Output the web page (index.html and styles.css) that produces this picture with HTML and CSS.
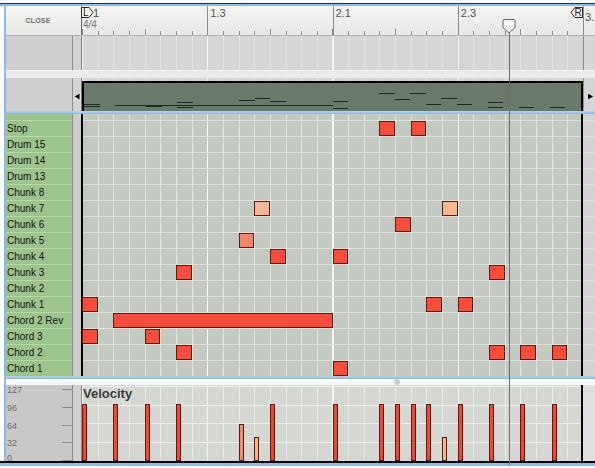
FILE: index.html
```html
<!DOCTYPE html>
<html>
<head>
<meta charset="utf-8">
<link rel="stylesheet" href="styles.css">
</head>
<body>
<div class="app">
  <div class="topbar"></div>
  <div class="body">
    <!-- ruler -->
    <div class="sec ruler">
      <div class="side rside"><span class="close">CLOSE</span></div>
      <div class="gutter rgutter"></div>
      <div class="lane">
        <div class="loop rloop">
          <div class="rcell first">
            <div class="lrow">
              <svg class="lmark" width="13" height="11" viewBox="0 0 13 11"><path d="M0.5 0.5 H8 L12 5.5 L8 10.5 H0.5 Z" fill="#f6f6f6" stroke="#2a2a2a"/><text x="2" y="9.3" font-size="10" font-family="Liberation Sans, sans-serif" fill="#222">L</text></svg>
              <span class="num one">1</span>
            </div>
            <div class="sig">4/4</div>
          </div>
          <div class="rcell"><span class="num">1.3</span></div>
          <div class="rcell"><span class="num">2.1</span></div>
          <div class="rcell last"><span class="num">2.3</span>
            <svg class="rmark" width="13" height="11" viewBox="0 0 13 11"><path d="M12.5 0.5 H5 L1 5.5 L5 10.5 H12.5 Z" fill="#f6f6f6" stroke="#2a2a2a"/><text x="4.6" y="9.3" font-size="10" font-family="Liberation Sans, sans-serif" fill="#222">R</text></svg>
          </div>
        </div>
        <div class="after rafter"><span class="num">3.1</span></div>
      </div>
    </div>

    <!-- lane strip -->
    <div class="sec lanes">
      <div class="side gside"></div>
      <div class="gutter ggutter"></div>
      <div class="lane">
        <div class="loop gridv lanebg"></div>
        <div class="after lafter"></div>
      </div>
    </div>

    <div class="gap"></div>

    <!-- overview -->
    <div class="sec ov">
      <div class="side gside"></div>
      <div class="gutter ggutter ovgutter">
        <svg width="8" height="9" viewBox="0 0 8 9"><path d="M0.8 4.5 L7 0.8 V8.2 Z" fill="#000" stroke="#fff" stroke-width="0.8"/></svg>
      </div>
      <div class="lane">
        <div class="loop gridv lanebg ovloop">
          <div class="clip">
            <i style="grid-row:12;grid-column:1 / span 1"></i>
            <i style="grid-row:14;grid-column:1 / span 1"></i>
            <i style="grid-row:13;grid-column:3 / span 14"></i>
            <i style="grid-row:14;grid-column:5 / span 1"></i>
            <i style="grid-row:10;grid-column:7 / span 1"></i>
            <i style="grid-row:15;grid-column:7 / span 1"></i>
            <i style="grid-row:8;grid-column:11 / span 1"></i>
            <i style="grid-row:6;grid-column:12 / span 1"></i>
            <i style="grid-row:9;grid-column:13 / span 1"></i>
            <i style="grid-row:9;grid-column:17 / span 1"></i>
            <i style="grid-row:16;grid-column:17 / span 1"></i>
            <i style="grid-row:1;grid-column:20 / span 1"></i>
            <i style="grid-row:7;grid-column:21 / span 1"></i>
            <i style="grid-row:1;grid-column:22 / span 1"></i>
            <i style="grid-row:12;grid-column:23 / span 1"></i>
            <i style="grid-row:6;grid-column:24 / span 1"></i>
            <i style="grid-row:12;grid-column:25 / span 1"></i>
            <i style="grid-row:10;grid-column:27 / span 1"></i>
            <i style="grid-row:15;grid-column:27 / span 1"></i>
            <i style="grid-row:15;grid-column:29 / span 1"></i>
            <i style="grid-row:15;grid-column:31 / span 1"></i>
          </div>
        </div>
        <div class="after ovafter">
          <svg width="9" height="9" viewBox="0 0 9 9"><path d="M8 4.5 L1.5 0.8 V8.2 Z" fill="#000" stroke="#fff" stroke-width="0.8"/></svg>
        </div>
      </div>
    </div>

    <div class="hsep"></div>

    <!-- piano roll -->
    <div class="sec roll">
      <div class="side labels">
        <div class="lbl top"></div>
        <div class="lbl">Stop</div>
        <div class="lbl">Drum 15</div>
        <div class="lbl">Drum 14</div>
        <div class="lbl">Drum 13</div>
        <div class="lbl">Chunk 8</div>
        <div class="lbl">Chunk 7</div>
        <div class="lbl">Chunk 6</div>
        <div class="lbl">Chunk 5</div>
        <div class="lbl">Chunk 4</div>
        <div class="lbl">Chunk 3</div>
        <div class="lbl">Chunk 2</div>
        <div class="lbl">Chunk 1</div>
        <div class="lbl">Chord 2 Rev</div>
        <div class="lbl">Chord 3</div>
        <div class="lbl">Chord 2</div>
        <div class="lbl">Chord 1</div>
      </div>
      <div class="gutter rollgutter"></div>
      <div class="lane">
        <div class="loop gridv rollgrid">
          <div class="note red" style="grid-row:2;grid-column:20 / span 1"></div>
          <div class="note red" style="grid-row:2;grid-column:22 / span 1"></div>
          <div class="note peach" style="grid-row:7;grid-column:12 / span 1"></div>
          <div class="note peach" style="grid-row:7;grid-column:24 / span 1"></div>
          <div class="note red" style="grid-row:8;grid-column:21 / span 1"></div>
          <div class="note salmon" style="grid-row:9;grid-column:11 / span 1"></div>
          <div class="note red" style="grid-row:10;grid-column:13 / span 1"></div>
          <div class="note red" style="grid-row:10;grid-column:17 / span 1"></div>
          <div class="note red" style="grid-row:11;grid-column:7 / span 1"></div>
          <div class="note red" style="grid-row:11;grid-column:27 / span 1"></div>
          <div class="note red" style="grid-row:13;grid-column:1 / span 1"></div>
          <div class="note red" style="grid-row:13;grid-column:23 / span 1"></div>
          <div class="note red" style="grid-row:13;grid-column:25 / span 1"></div>
          <div class="note red" style="grid-row:14;grid-column:3 / span 14"></div>
          <div class="note red" style="grid-row:15;grid-column:1 / span 1"></div>
          <div class="note red" style="grid-row:15;grid-column:5 / span 1"></div>
          <div class="note red" style="grid-row:16;grid-column:7 / span 1"></div>
          <div class="note red" style="grid-row:16;grid-column:27 / span 1"></div>
          <div class="note red" style="grid-row:16;grid-column:29 / span 1"></div>
          <div class="note red" style="grid-row:16;grid-column:31 / span 1"></div>
          <div class="note red" style="grid-row:17;grid-column:17 / span 1"></div>
        </div>
        <div class="after rollafter"></div>
      </div>
    </div>

    <div class="hsep low"></div>
    <div class="wstrip"><span class="dot"></span></div>

    <!-- velocity -->
    <div class="sec vel">
      <div class="side vside">
        <div class="vl"><span>127</span><b></b></div>
        <div class="vl"><span>96</span><b></b></div>
        <div class="vl"><span>64</span><b></b></div>
        <div class="vl"><span>32</span><b></b></div>
        <div class="vl"><span>0</span><b></b></div>
      </div>
      <div class="gutter vgutter"></div>
      <div class="lane">
        <div class="loop gridv velgrid">
          <div class="vlabel">Velocity</div>
          <div class="vbars">
            <div class="vb red" style="grid-column:1;height:57px"></div>
            <div class="vb red" style="grid-column:3;height:57px"></div>
            <div class="vb red" style="grid-column:5;height:57px"></div>
            <div class="vb red" style="grid-column:7;height:57px"></div>
            <div class="vb salmon" style="grid-column:11;height:37px"></div>
            <div class="vb peach" style="grid-column:12;height:24px"></div>
            <div class="vb red" style="grid-column:13;height:57px"></div>
            <div class="vb red" style="grid-column:17;height:57px"></div>
            <div class="vb red" style="grid-column:20;height:57px"></div>
            <div class="vb red" style="grid-column:21;height:57px"></div>
            <div class="vb red" style="grid-column:22;height:57px"></div>
            <div class="vb red" style="grid-column:23;height:57px"></div>
            <div class="vb peach" style="grid-column:24;height:24px"></div>
            <div class="vb red" style="grid-column:25;height:57px"></div>
            <div class="vb red" style="grid-column:27;height:57px"></div>
            <div class="vb red" style="grid-column:29;height:57px"></div>
            <div class="vb red" style="grid-column:31;height:57px"></div>
          </div>
        </div>
        <div class="after velafter"></div>
      </div>
    </div>
  </div>
  <div class="bottom"></div>

  <div class="playhead"></div>
  <svg class="phmark" width="14" height="15" viewBox="0 0 14 15"><path d="M1 1.5 Q1 0.5 2 0.5 H12 Q13 0.5 13 1.5 V8.5 L7 14 L1 8.5 Z" fill="#f3f3f3" stroke="#6a6a6a"/></svg>
</div>
</body>
</html>
```

FILE: styles.css
```css
* { box-sizing: border-box; }
html, body { margin: 0; padding: 0; }
body { background: #fff; font-family: "Liberation Sans", Arial, sans-serif; }

.app { position: relative; width: 595px; height: 468px; overflow: hidden; background: #fff; }

.topbar { margin-top: 3px; height: 3px; border-top: 1px solid #2c2c2c; background: #8fbbe0; }
.body { margin-left: 4px; border-left: 2px solid #8fbbe0; }

.sec { display: flex; }
.side { width: 67px; flex: none; border-right: 1px solid #8c8c8c; }
.gutter { width: 9px; flex: none; border-right: 1px solid #7c7c7c; }
.lane { flex: 1; display: flex; min-width: 0; }
.loop { width: 501px; flex: none; }
.after { flex: 1; }

/* shared vertical grid lines (16th steps, brighter every half bar) */
.gridv {
  background-image:
    repeating-linear-gradient(to right, #f6f7f5 0 1px, transparent 1px 125.25px),
    repeating-linear-gradient(to right, #e2e5df 0 1px, transparent 1px 15.65625px);
}

/* ruler */
.ruler { height: 30px; border-bottom: 1px solid #b2b2b2; background: linear-gradient(#f4f4f2, #e7e7e5); }
.rside { border-right-color: transparent; display: flex; align-items: center; justify-content: center; padding-right: 2px; padding-bottom: 0; }
.close { font-size: 7px; font-weight: bold; color: #707070; letter-spacing: 0.2px; }
.rgutter { border-right-color: #6e6e6e; }
.rloop {
  display: grid;
  grid-template-columns: repeat(4, 1fr);
  background:
    repeating-linear-gradient(to right, #8a8a8a 0 1px, transparent 1px 62.625px) left bottom / 100% 6px no-repeat,
    repeating-linear-gradient(to right, #8a8a8a 0 1px, transparent 1px 15.65625px) left bottom / 100% 4px no-repeat;
}
.rcell { border-left: 1px solid #8a8a8a; padding: 1px 0 0 2px; display: flex; align-items: flex-start; }
.rcell.first { border-left: none; padding-left: 0; flex-direction: column; }
.num { font-size: 11px; color: #505050; line-height: 13px; }
.lrow { display: flex; align-items: flex-start; margin-left: -1px; }
.lmark { display: block; }
.num.one { margin-left: -1px; line-height: 12px; }
.sig { font-size: 10px; color: #7a7a7a; line-height: 10px; margin-top: 1px; padding-left: 1px; }
.rcell.last .rmark { margin-left: auto; margin-right: 0; display: block; }
.rafter { border-left: 1px solid #8a8a8a; padding: 1px 0 0 1px; }

/* lanes strip */
.lanes { height: 34px; }
.gside { background: #cfcfcf; }
.ggutter { background: #d3d3d3; }
.lanebg { background-color: #d5d5d5; }
.lafter { background: #d6d6d6; border-left: 1px solid #8a8a8a; }

.gap { height: 8px; background: #ececec; border-top: 1px solid #f4f4f4; }

/* overview */
.ov { height: 33px; }
.ovgutter { display: flex; align-items: center; justify-content: flex-end; padding-top: 3px; }
.ovgutter svg { display: block; margin-right: 0; }
.ovloop { padding-top: 3px; }
.clip {
  height: 30px;
  border: 2px solid #000;
  border-bottom: none;
  background: #6b796a;
  padding-top: 10px;
  margin-left: 0;
  display: grid;
  grid-template-columns: repeat(32, 1fr);
  grid-template-rows: repeat(16, 1px);
}
.clip i { display: block; background: #1f2a1f; height: 1px; }
.ovafter { background: #d6d6d6; border-left: 1px solid #8a8a8a; display: flex; align-items: center; padding-left: 2px; padding-top: 4px; }
.ovafter svg { display: block; }

.hsep { height: 3px; background: linear-gradient(#b4d3ec, #8dbadf); }

/* piano roll */
.roll { height: 262px; }
.labels { display: grid; grid-template-rows: 6px repeat(16, 16px); background: #9ec48e; }
.lbl { border-top: 1px solid #b9d6ac; font-size: 10px; line-height: 15px; color: #121212; padding-left: 1px; white-space: nowrap; }
.lbl.top { border-top: none; }
.rollgutter { background: #cbcbcb; border-right-color: #000; }
.rollgrid {
  display: grid;
  grid-template-columns: repeat(32, 1fr);
  grid-template-rows: 6px repeat(16, 16px);
  background-color: #c3c8c1;
  background-image:
    linear-gradient(to right, #000 0 1px, transparent 1px),
    linear-gradient(to left, #000 0 2px, transparent 2px),
    repeating-linear-gradient(to bottom, #dfe2dc 0 1px, transparent 1px 16px),
    repeating-linear-gradient(to right, #f6f7f5 0 1px, transparent 1px 125.25px),
    repeating-linear-gradient(to right, #e2e5df 0 1px, transparent 1px 15.65625px);
  background-size: 100% 100%, 100% 100%, 100% 256px, 100% 100%, 100% 100%;
  background-position: 0 0, 0 0, 0 6px, 0 0, 0 0;
  background-repeat: no-repeat;
}
.note { margin-top: 1px; height: 15px; border: 1px solid #5e1a10; }
.note.red { background: #f64c3b; }
.note.salmon { background: #f4866b; }
.note.peach { background: #f8b793; }
.rollafter {
  background-color: #d3d3d3;
  background-image: repeating-linear-gradient(to bottom, #e2e2e2 0 1px, transparent 1px 16px);
  background-position: 0 6px;
  background-size: 100% 256px;
  background-repeat: no-repeat;
}

.hsep.low { height: 3px; }
.wstrip { height: 6px; background: #f7fafc; display: flex; padding-left: 388px; }
.dot { width: 6px; height: 6px; border-radius: 50%; background: #cbcbcb; }

/* velocity */
.vel { height: 76px; }
.vside { background: #c8c8c8; display: grid; grid-template-rows: repeat(4, 17.75px) 1fr; }
.vl { display: flex; justify-content: space-between; align-items: flex-start; }
.vl span { font-size: 9px; line-height: 10px; color: #6c6c6c; padding-left: 1px; }
.vl b { display: block; width: 10px; height: 1px; background: #8c8c8c; margin-top: 4px; }
.vl:last-child span { margin-top: -3px; }
.vgutter { background: #cfcfcf; border-right-color: #8a8a8a; }
.velgrid {
  display: grid;
  background-color: #d4d7d2;
  background-image:
    linear-gradient(to left, #000 0 2px, transparent 2px),
    repeating-linear-gradient(to top, transparent 0 17.75px, #eef0ec 17.75px 18.75px),
    repeating-linear-gradient(to right, #f6f7f5 0 1px, transparent 1px 125.25px),
    repeating-linear-gradient(to right, #eaece8 0 1px, transparent 1px 15.65625px);
}
.vlabel { grid-area: 1 / 1; font-size: 13px; font-weight: bold; color: #3a3a3a; padding: 2px 0 0 1px; line-height: 14px; }
.vbars { grid-area: 1 / 1; display: grid; grid-template-columns: repeat(32, 1fr); align-items: end; }
.vb { grid-row: 1; width: 5px; border: 1px solid #5e1a10; }
.vb.red { background: #e9473a; }
.vb.salmon { background: #f08a70; }
.vb.peach { background: #f6b38e; }
.velafter { background: #dedede; }

.bottom { height: 7px; border-top: 2px solid #000; background: linear-gradient(#8fbbe0 0 3px, #ffffff 3px); }

/* playhead overlay */
.playhead { position: absolute; left: 509px; top: 26px; bottom: 3px; width: 1px; background: #6e6e6e; }
.phmark { position: absolute; left: 502px; top: 19px; }
```
